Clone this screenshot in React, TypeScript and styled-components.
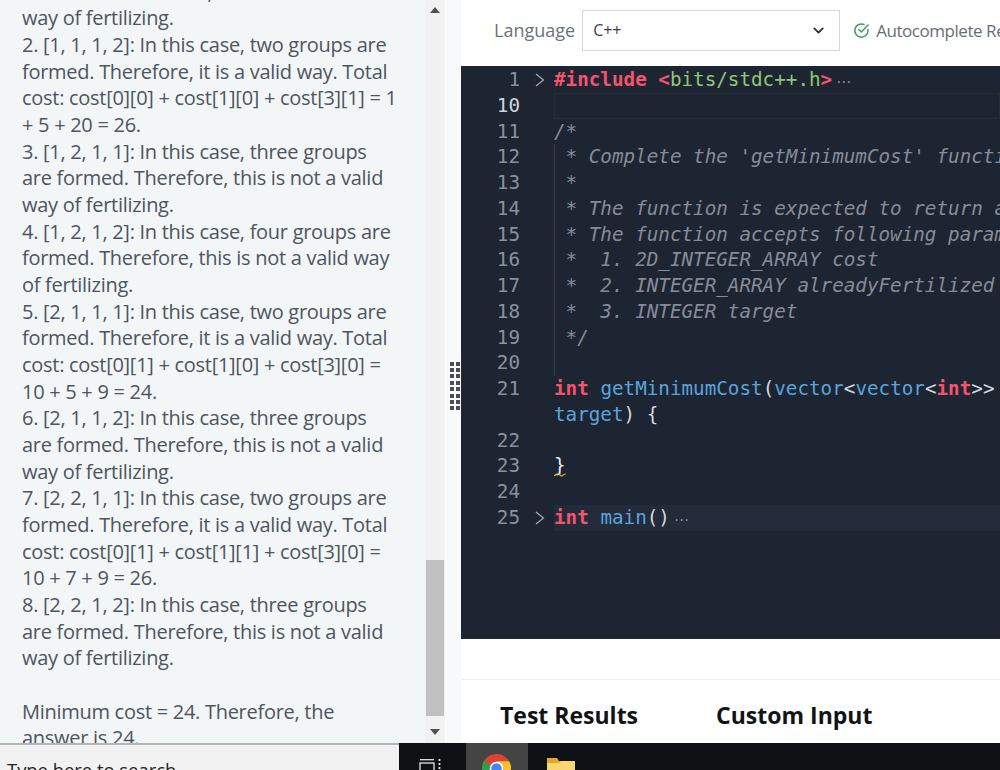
import { ChevronDown } from 'lucide-react'
import styled, { createGlobalStyle } from 'styled-components'

const Global = createGlobalStyle`
  html, body {
    margin: 0;
    height: 100%;
    overflow: hidden;
    background: #fff;
  }
`
const Page = styled.div`
  width: 1000px;
  height: 770px;
  display: flex;
  flex-direction: column;
  overflow: hidden;
  font-family: 'Open Sans', sans-serif;
`
const Main = styled.div`
  height: 743px;
  display: flex;
  overflow: hidden;
`
const Problem = styled.div`
  width: 425px;
  flex: none;
  background: #f3f6f7;
  overflow: hidden;
`
const Statement = styled.div`
  margin-top: -21.5px;
  padding-left: 22px;
  font-size: 20px;
  line-height: 26.67px;
  letter-spacing: -0.28px;
  white-space: nowrap;
  color: #4d5560;
`
const Blank = styled.div`
  height: 26.67px;
`
const Scrollbar = styled.div`
  width: 20px;
  flex: none;
  background: #f1f1f1;
  display: flex;
  flex-direction: column;
  align-items: center;
  justify-content: space-between;
  padding: 7px 0;
  box-sizing: border-box;
  position: relative;
`
const Arrow = styled.div<{ $down?: boolean }>`
  width: 0;
  height: 0;
  border-left: 5px solid transparent;
  border-right: 5px solid transparent;
  ${(p) => (p.$down ? 'border-top: 6px solid #505050;' : 'border-bottom: 6px solid #505050;')}
`
const DownArrow = styled(Arrow)`
  margin-bottom: 1px;
  margin-top: auto;
`
const Thumb = styled.div`
  position: absolute;
  top: 560px;
  left: 1px;
  width: 18px;
  height: 156px;
  background: #c0c0c0;
`
const Divider = styled.div`
  width: 16px;
  flex: none;
  background: #f7f9fb;
  display: flex;
  align-items: center;
  justify-content: center;
`
const Grip = styled.div`
  display: grid;
  grid-template-columns: repeat(2, 4px);
  grid-auto-rows: 4px;
  column-gap: 2px;
  row-gap: 2.4px;
  margin: 29px 0 0 3px;
`
const GripDot = styled.span`
  background: #4a4f57;
`
const Workspace = styled.div`
  flex: 1;
  min-width: 0;
  display: flex;
  flex-direction: column;
`
const Toolbar = styled.div`
  height: 66px;
  flex: none;
  display: flex;
  align-items: center;
  padding: 0 0 6px 33px;
  box-sizing: border-box;
  white-space: nowrap;
  background: #fff;
`
const Label = styled.span`
  font-size: 18px;
  color: #6b727b;
  margin-right: 7px;
`
const Select = styled.div`
  width: 258px;
  height: 41px;
  flex: none;
  box-sizing: border-box;
  border: 1px solid #d3d6da;
  display: flex;
  align-items: center;
  justify-content: space-between;
  padding: 0 12px 0 10px;
  font-size: 16px;
  color: #3c424a;
  margin-right: 13px;
`
const Toggle = styled.span`
  display: flex;
  flex: none;
  align-items: center;
  gap: 6px;
  font-size: 17px;
  letter-spacing: -0.45px;
  color: #666d76;
`
const Editor = styled.div`
  height: 573px;
  flex: none;
  background: #1e2532;
  padding-top: 1px;
  box-sizing: border-box;
  overflow: hidden;
  font-family: 'DejaVu Sans Mono', monospace;
  font-size: 19.25px;
  line-height: 25.77px;
`
const Line = styled.div<{ $tinted?: boolean }>`
  display: flex;
  height: 25.77px;
  white-space: pre;
  background: ${(p) => (p.$tinted ? '#232b3a' : 'transparent')};
`
const LineNumber = styled.span<{ $active?: boolean }>`
  width: 59px;
  flex: none;
  text-align: right;
  color: ${(p) => (p.$active ? '#d0d4da' : '#8a919c')};
  background: #1e2532;
`
const Fold = styled.span`
  width: 34px;
  flex: none;
  display: flex;
  align-items: center;
  justify-content: center;
  padding-left: 5px;
  box-sizing: border-box;
  background: #1e2532;
`
const Code = styled.span<{ $active?: boolean; $guide?: boolean }>`
  flex: 1;
  min-width: 0;
  overflow: hidden;
  box-sizing: border-box;
  ${(p) => (p.$active ? 'border: 1px solid #282d34; line-height: 23.77px;' : '')}
  ${(p) => (p.$guide ? 'box-shadow: inset 1px 0 0 #39404c;' : '')}
`
const Tok = styled.span<{ $kind: TokenKind }>`
  color: ${(p) => COLORS[p.$kind]};
  font-weight: ${(p) => (p.$kind === 'keyword' ? 700 : 400)};
  font-style: ${(p) => (p.$kind === 'comment' ? 'italic' : 'normal')};
`
const Ellipsis = styled.span`
  color: #8d939d;
  font-size: 12px;
  letter-spacing: -2.2px;
  margin-left: 3px;
`
const Squiggle = styled.span`
  position: relative;
  display: inline-block;
  color: #e4e7ea;
  & > svg {
    position: absolute;
    left: -2px;
    top: 19px;
  }
`
const Gap = styled.div`
  height: 40px;
  flex: none;
  background: #fff;
  border-bottom: 1px solid #eceef0;
`
const Tabs = styled.div`
  flex: 1;
  display: flex;
  gap: 78px;
  align-items: center;
  padding: 7px 0 0 39px;
  background: #fff;
`
const Tab = styled.span`
  font-size: 23px;
  font-weight: 700;
  color: #111417;
`
const Taskbar = styled.div`
  height: 27px;
  flex: none;
  display: flex;
  background: #0e1013;
  overflow: hidden;
`
const Search = styled.div`
  width: 399px;
  flex: none;
  box-sizing: border-box;
  background: #f2f2f2;
  border-top: 2px solid #b5b5b5;
  padding: 13px 0 0 7px;
  font-size: 18.4px;
  line-height: 24px;
  color: #222;
`
const TaskItem = styled.div<{ $width: number; $top: number; $active?: boolean }>`
  width: ${(p) => p.$width}px;
  flex: none;
  display: flex;
  justify-content: center;
  padding-top: ${(p) => p.$top}px;
  box-sizing: border-box;
  background: ${(p) => (p.$active ? '#444444' : 'transparent')};
`
const TaskViewSlot = styled(TaskItem)`
  padding-right: 5px;
`
const ChromeSlot = styled(TaskItem)`
  padding-right: 2px;
`

type TokenKind = 'keyword' | 'include' | 'fn' | 'plain' | 'comment' | 'type'
const COLORS: Record<TokenKind, string> = {
  keyword: '#f2546b',
  include: '#8fc874',
  fn: '#5aa3dc',
  plain: '#d5d9df',
  comment: '#858c97',
  type: '#5aa3dc',
}

type Token = [TokenKind, string]
type Row = { n?: number; fold?: boolean; active?: boolean; tinted?: boolean; guide?: boolean; dots?: boolean; tokens: Token[] }

const STATEMENT = [
  'is formed. Therefore, this is not a valid',
  'way of fertilizing.',
  '2. [1, 1, 1, 2]: In this case, two groups are',
  'formed. Therefore, it is a valid way. Total',
  'cost: cost[0][0] + cost[1][0] + cost[3][1] = 1',
  '+ 5 + 20 = 26.',
  '3. [1, 2, 1, 1]: In this case, three groups',
  'are formed. Therefore, this is not a valid',
  'way of fertilizing.',
  '4. [1, 2, 1, 2]: In this case, four groups are',
  'formed. Therefore, this is not a valid way',
  'of fertilizing.',
  '5. [2, 1, 1, 1]: In this case, two groups are',
  'formed. Therefore, it is a valid way. Total',
  'cost: cost[0][1] + cost[1][0] + cost[3][0] =',
  '10 + 5 + 9 = 24.',
  '6. [2, 1, 1, 2]: In this case, three groups',
  'are formed. Therefore, this is not a valid',
  'way of fertilizing.',
  '7. [2, 2, 1, 1]: In this case, two groups are',
  'formed. Therefore, it is a valid way. Total',
  'cost: cost[0][1] + cost[1][1] + cost[3][0] =',
  '10 + 7 + 9 = 26.',
  '8. [2, 2, 1, 2]: In this case, three groups',
  'are formed. Therefore, this is not a valid',
  'way of fertilizing.',
  '',
  'Minimum cost = 24. Therefore, the',
  'answer is 24.',
]

const ROWS: Row[] = [
  { n: 1, fold: true, dots: true, tokens: [['keyword', '#include'], ['plain', ' '], ['keyword', '<'], ['include', 'bits/stdc++.h'], ['keyword', '>']] },
  { n: 10, active: true, tokens: [] },
  { n: 11, tokens: [['comment', '/*']] },
  { n: 12, guide: true, tokens: [['comment', " * Complete the 'getMinimumCost' function below."]] },
  { n: 13, guide: true, tokens: [['comment', ' *']] },
  { n: 14, guide: true, tokens: [['comment', ' * The function is expected to return an INTEGER.']] },
  { n: 15, guide: true, tokens: [['comment', ' * The function accepts following parameters:']] },
  { n: 16, guide: true, tokens: [['comment', ' *  1. 2D_INTEGER_ARRAY cost']] },
  { n: 17, guide: true, tokens: [['comment', ' *  2. INTEGER_ARRAY alreadyFertilized']] },
  { n: 18, guide: true, tokens: [['comment', ' *  3. INTEGER target']] },
  { n: 19, guide: true, tokens: [['comment', ' */']] },
  { n: 20, guide: true, tokens: [] },
  { n: 21, tokens: [['keyword', 'int'], ['plain', ' '], ['fn', 'getMinimumCost'], ['plain', '('], ['type', 'vector'], ['plain', '<'], ['type', 'vector'], ['plain', '<'], ['keyword', 'int'], ['plain', '>> cost,']] },
  { tokens: [['fn', 'target'], ['plain', ') {']] },
  { n: 22, tokens: [] },
  { n: 23, tokens: [] },
  { n: 24, tokens: [] },
  { n: 25, fold: true, tinted: true, dots: true, tokens: [['keyword', 'int'], ['plain', ' '], ['fn', 'main'], ['plain', '()']] },
]

function FoldIcon() {
  return (
    <svg width="10" height="14" viewBox="0 0 10 14" fill="none" stroke="#a5abb4" strokeWidth="1.2">
      <path d="M1 1l7.5 6L1 13" />
    </svg>
  )
}

function SquiggleMark() {
  return (
    <svg width="14" height="5" viewBox="0 0 14 5" fill="none" stroke="#d1b636" strokeWidth="1.2">
      <path d="M0 1.5q2 3 3.5 1.5T7 2q2 3 3.500 1.500T14 2" />
    </svg>
  )
}

function CheckIcon() {
  return (
    <svg width="17" height="17" viewBox="0 0 17 17" fill="none" stroke="#3f9b63" strokeWidth="1.5" strokeLinecap="round" strokeLinejoin="round">
      <path d="M15 7.6V8.5a6.6 6.6 0 1 1-3.9-6" />
      <path d="M15 3 8.4 10 5.900 7.600" />
    </svg>
  )
}

function TaskViewIcon() {
  return (
    <svg width="22" height="11" viewBox="0 0 22 11" fill="none" stroke="#e8e8e8" strokeWidth="1.3">
      <path d="M1 .7h14" />
      <rect x="1" y="4" width="14" height="9" />
      <path d="M20.5 0v2M20.5 4v2M20.5 8v2" strokeWidth="1.8" />
    </svg>
  )
}

function ChromeIcon() {
  return (
    <svg width="29" height="29" viewBox="0 0 30 30">
      <circle cx="15" cy="15" r="15" fill="#dd4438" />
      <path d="M15 15 2 7.5A15 15 0 0 0 15 30l7.5-13z" fill="#2f9e4f" />
      <path d="M15 7.5h13A15 15 0 0 1 15 30l7.5-15z" fill="#fbc02d" />
      <circle cx="15" cy="15" r="7" fill="#fff" />
      <circle cx="15" cy="15" r="5.4" fill="#4285f4" />
    </svg>
  )
}

function FolderIcon() {
  return (
    <svg width="28" height="24" viewBox="0 0 28 24">
      <path d="M0 0h10l2 3h16v21H0z" fill="#e3a72c" />
      <path d="M0 5h12l2-2h14v21H0z" fill="#f9d66f" />
    </svg>
  )
}

export default function App() {
  return (
    <Page>
      <Global />
      <Main>
        <Problem>
          <Statement>
            {STATEMENT.map((text, i) => (text ? <div key={i}>{text}</div> : <Blank key={i} />))}
          </Statement>
        </Problem>
        <Scrollbar>
          <Arrow />
          <Thumb />
          <DownArrow $down />
        </Scrollbar>
        <Divider>
          <Grip>
            {Array.from({ length: 16 }, (_, i) => (
              <GripDot key={i} />
            ))}
          </Grip>
        </Divider>
        <Workspace>
          <Toolbar>
            <Label>Language</Label>
            <Select>
              C++
              <ChevronDown size={17} strokeWidth={2.6} color="#2c3138" />
            </Select>
            <Toggle>
              <CheckIcon />
              Autocomplete Ready
            </Toggle>
          </Toolbar>
          <Editor>
            {ROWS.map((row, i) => (
              <Line key={i} $tinted={row.tinted}>
                <LineNumber $active={row.active}>{row.n ?? ''}</LineNumber>
                <Fold>{row.fold ? <FoldIcon /> : null}</Fold>
                <Code $active={row.active} $guide={row.guide}>
                  {row.n === 23 ? (
                    <Squiggle>
                      {'}'}
                      <SquiggleMark />
                    </Squiggle>
                  ) : null}
                  {row.tokens.map(([kind, text], j) => (
                    <Tok key={j} $kind={kind}>
                      {text}
                    </Tok>
                  ))}
                  {row.dots ? <Ellipsis>···</Ellipsis> : null}
                </Code>
              </Line>
            ))}
          </Editor>
          <Gap />
          <Tabs>
            <Tab>Test Results</Tab>
            <Tab>Custom Input</Tab>
          </Tabs>
        </Workspace>
      </Main>
      <Taskbar>
        <Search>Type here to search</Search>
        <TaskViewSlot $width={67} $top={16}>
          <TaskViewIcon />
        </TaskViewSlot>
        <ChromeSlot $width={62} $top={11} $active>
          <ChromeIcon />
        </ChromeSlot>
        <TaskItem $width={66} $top={15}>
          <FolderIcon />
        </TaskItem>
      </Taskbar>
    </Page>
  )
}
